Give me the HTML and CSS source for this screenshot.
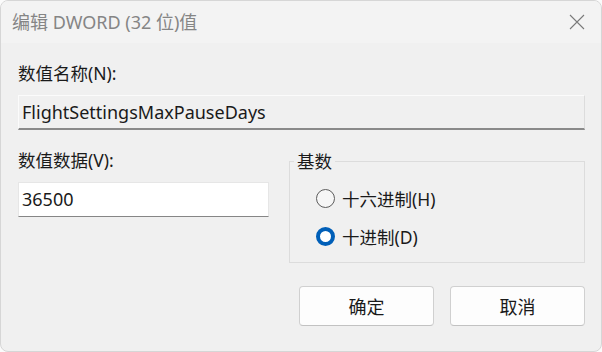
FILE: index.html
```html
<!DOCTYPE html>
<html>
  <head>
    <title>编辑 DWORD (32 位)值</title>
    <link rel="stylesheet" href="styles.css">
  </head>
  <body>
    <div class="window">
      <div class="title_bar">
        <span class="title_text">编辑 DWORD (32 位)值</span>
        <svg class="close_btn" width="16" height="16" viewBox="0 0 16 16">
          <path d="M1 1 L15 15 M15 1 L1 15" stroke="#7a7a7a" stroke-width="1.1" fill="none"/>
        </svg>
      </div>
      <div class="content">
        <div class="label label_name">数值名称(N):</div>
        <div class="edit edit_disabled">FlightSettingsMaxPauseDays</div>
        <div class="row">
          <div class="data_col">
            <div class="label">数值数据(V):</div>
            <div class="edit edit_data">36500</div>
          </div>
          <fieldset class="base_box">
            <legend>基数</legend>
            <div class="radio_list">
              <div class="radio_row">
                <span class="radio"></span>
                <span>十六进制(H)</span>
              </div>
              <div class="radio_row">
                <span class="radio radio_on"></span>
                <span>十进制(D)</span>
              </div>
            </div>
          </fieldset>
        </div>
        <div class="buttons">
          <button class="btn">确定</button>
          <button class="btn">取消</button>
        </div>
      </div>
    </div>
  </body>
</html>
```

FILE: styles.css
```css
/* registry editor dword dialog */
html, body {
  margin: 0;
  padding: 0;
  background: #fbfbfb;
}

body {
  font-family: "Noto Sans", "Noto Sans CJK SC", sans-serif;
  color: #1a1a1a;
  font-size: 17.5px;
}

.window {
  width: 602px;
  height: 352px;
  box-sizing: border-box;
  background: #f0f0f0;
  border-radius: 8px;
  border: 1px solid #d6d6d6;
  overflow: hidden;
}

.title_bar {
  height: 42px;
  background: #f3f3f3;
  display: flex;
  align-items: center;
  justify-content: space-between;
  padding: 0 16px 0 11px;
}

.title_text {
  font-size: 18px;
  color: #858585;
  padding-bottom: 2px;
}

.close_btn {
  margin-top: -1px;
}

.content {
  padding: 0 16px 0 17px;
}

.label {
  line-height: 20px;
  height: 20px;
}

.label_name {
  margin-top: 20px;
}

.edit {
  box-sizing: border-box;
  height: 35px;
  margin-top: 12px;
  padding-left: 3px;
  font-size: 18px;
  line-height: 33px;
  border: 1px solid #e6e6e6;
  border-bottom: 1px solid #868686;
  background: #fff;
}

.edit_disabled {
  background: #f0f0f0;
  border-color: #fbfbfb;
  border-right-color: #dcdcdc;
  border-bottom: 2px solid #8a8a8a;
}

.edit_data {
  width: 251px;
}

.row {
  display: grid;
  grid-template-columns: 251px 1fr;
  column-gap: 20px;
  margin-top: 20px;
}

.base_box {
  margin: 1px 0 0 0;
  padding: 0;
  border: 1px solid #dcdcdc;
}

.base_box legend {
  padding: 0 3px;
  margin-left: 4px;
  line-height: 20px;
}

.radio_list {
  padding: 17px 0 16px 26px;
}

.radio_row {
  display: flex;
  align-items: center;
  gap: 7px;
  height: 20px;
}

.radio_row + .radio_row {
  margin-top: 18px;
}

.radio {
  width: 17px;
  height: 17px;
  border: 1px solid #5c5c5c;
  border-radius: 50%;
  background: #f6f6f6;
}

.radio_on {
  width: 11px;
  height: 11px;
  border: 4px solid #005fb8;
  background: #ffffff;
}

.buttons {
  display: flex;
  justify-content: flex-end;
  gap: 16px;
  margin-top: 23px;
}

.btn {
  width: 135px;
  height: 40px;
  background: #fdfdfd;
  border: 1px solid #d0d0d0;
  border-bottom-color: #c2c2c2;
  border-radius: 4px;
  font-family: "Noto Sans", "Noto Sans CJK SC", sans-serif;
  font-size: 18px;
  color: #1a1a1a;
  padding: 0;
}
```
